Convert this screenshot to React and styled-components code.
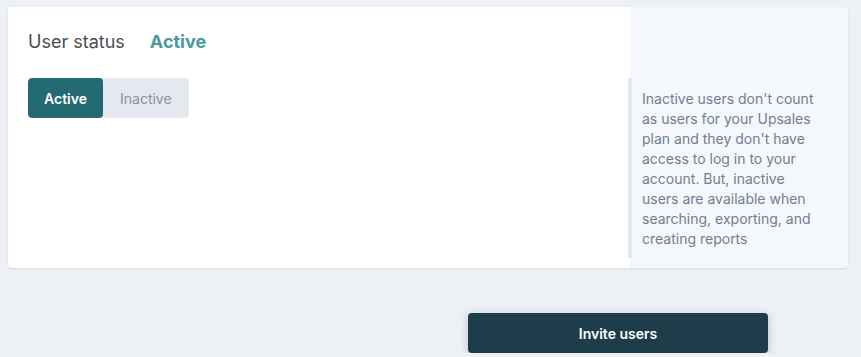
import React, { useState } from "react";
import styled, { createGlobalStyle } from "styled-components";

const GlobalStyle = createGlobalStyle`
  html, body {
    margin: 0;
    padding: 0;
    background: #edf0f5;
    font-family: Inter, "Noto Sans", sans-serif;
  }
`;

const Page = styled.div`
  padding: 7px 13px 0 8px;
`;

const Card = styled.div`
  display: flex;
  height: 261px;
  background: #fff;
  border-radius: 4px;
  box-shadow: 0 1px 2px rgba(30, 50, 80, 0.12);
  overflow: hidden;
`;

const Main = styled.div`
  flex: 1;
  padding: 23px 20px 0 20px;
`;

const Header = styled.div`
  display: flex;
  align-items: center;
  gap: 25px;
  height: 24px;
  font-size: 18px;
  line-height: 24px;
`;

const Label = styled.span`
  color: #4a4d52;
`;

const StatusValue = styled.span`
  color: #4a9aa0;
  font-weight: 700;
`;

const Toggle = styled.div`
  display: inline-flex;
  margin-top: 24px;
  border-radius: 4px;
  overflow: hidden;
  background: #e4e8ef;
`;

const ToggleButton = styled.button`
  height: 40px;
  padding: 0 ${(p) => (p.$active ? 16 : 17)}px;
  border: 0;
  font-family: inherit;
  font-size: 14px;
  font-weight: ${(p) => (p.$active ? 600 : 400)};
  color: ${(p) => (p.$active ? "#ffffff" : "#8993a2")};
  background: ${(p) => (p.$active ? "#246a72" : "#e4e8ef")};
  border-radius: ${(p) => (p.$active ? "4px" : "0")};
  cursor: pointer;
`;

const Aside = styled.div`
  width: 218px;
  background: #f4f7fb;
  padding-top: 71px;
`;

const Note = styled.div`
  width: 176px;
  margin-left: -2px;
  border-left: 4px solid #e4e8ee;
  padding: 11px 0 9px 10px;
  font-size: 14px;
  line-height: 20px;
  color: #717f90;
`;

const Footer = styled.div`
  padding: 45px 0 0 460px;
`;

const InviteButton = styled.button`
  width: 300px;
  height: 40px;
  border: 0;
  border-radius: 4px;
  background: #1e3d4a;
  color: #fff;
  font-family: inherit;
  font-size: 14px;
  font-weight: 600;
  box-shadow: 0 2px 8px rgba(30, 50, 80, 0.25);
  cursor: pointer;
`;

export default function App() {
  const [status, setStatus] = useState("Active");

  return (
    <>
      <GlobalStyle />
      <Page>
        <Card>
          <Main>
            <Header>
              <Label>User status</Label>
              <StatusValue>{status}</StatusValue>
            </Header>
            <Toggle>
              <ToggleButton
                $active={status === "Active"}
                onClick={() => setStatus("Active")}
              >
                Active
              </ToggleButton>
              <ToggleButton
                $active={status === "Inactive"}
                onClick={() => setStatus("Inactive")}
              >
                Inactive
              </ToggleButton>
            </Toggle>
          </Main>
          <Aside>
            <Note>
              Inactive users don't count as users for your Upsales plan and
              they don't have access to log in to your account. But, inactive
              users are available when searching, exporting, and creating
              reports
            </Note>
          </Aside>
        </Card>
        <Footer>
          <InviteButton>Invite users</InviteButton>
        </Footer>
      </Page>
    </>
  );
}
